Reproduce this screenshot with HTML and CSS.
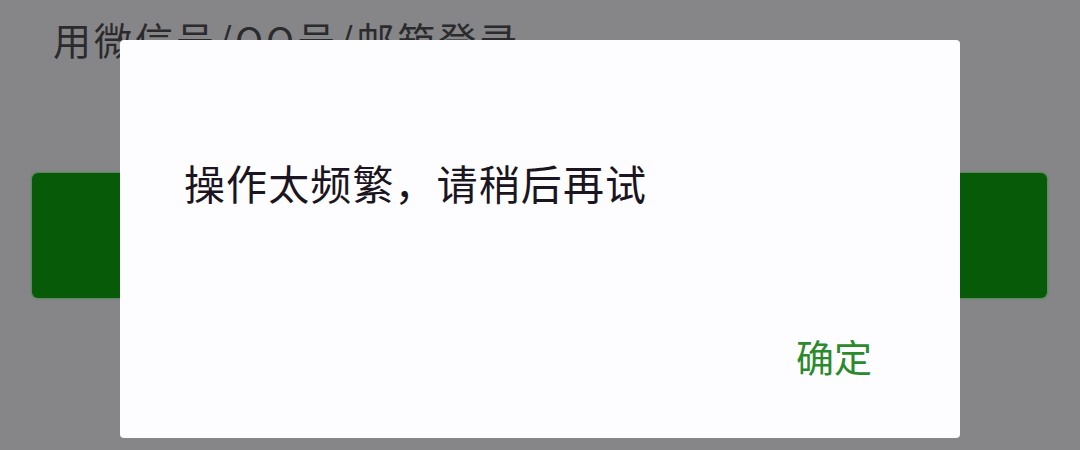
FILE: index.html
```html
<!DOCTYPE html>
<html lang="zh">
<head>
<meta charset="utf-8">
<link rel="stylesheet" href="styles.css">
</head>
<body>
<div class="page">
  <div class="title">用微信号/QQ号/邮箱登录</div>
  <div class="login-btn"></div>
</div>
<div class="dialog">
  <div class="message">操作太频繁，请稍后再试</div>
  <div class="actions"><span class="ok">确定</span></div>
</div>
</body>
</html>
```
FILE: styles.css
```css
html, body {
  margin: 0;
  padding: 0;
}
body {
  width: 1080px;
  height: 450px;
  background: #868689;
  overflow: hidden;
  position: relative;
  font-family: "Noto Sans CJK SC", "Noto Sans", sans-serif;
}
.page {
  display: flex;
  flex-direction: column;
  padding: 16px 32px 0 32px;
}
.title {
  font-size: 38px;
  line-height: 46px;
  color: #2b2b2d;
  padding-left: 21px;
  letter-spacing: 3px;
}
.login-btn {
  margin-top: 111px;
  height: 125px;
  width: 1015px;
  background: #075a07;
  border-radius: 6px;
  box-shadow: 0 0 2px 1px rgba(40, 140, 40, 0.5);
}
.dialog {
  position: absolute;
  left: 120px;
  top: 40px;
  width: 840px;
  height: 398px;
  background: #fdfdff;
  border-radius: 4px;
  display: flex;
  flex-direction: column;
  box-sizing: border-box;
  padding: 118px 88px 0 64px;
}
.message {
  font-size: 41px;
  line-height: 48px;
  letter-spacing: 1.1px;
  color: #1a1520;
}
.actions {
  display: flex;
  justify-content: flex-end;
  margin-top: 126px;
}
.ok {
  font-size: 38px;
  line-height: 48px;
  color: #2a8a2c;
}
```
